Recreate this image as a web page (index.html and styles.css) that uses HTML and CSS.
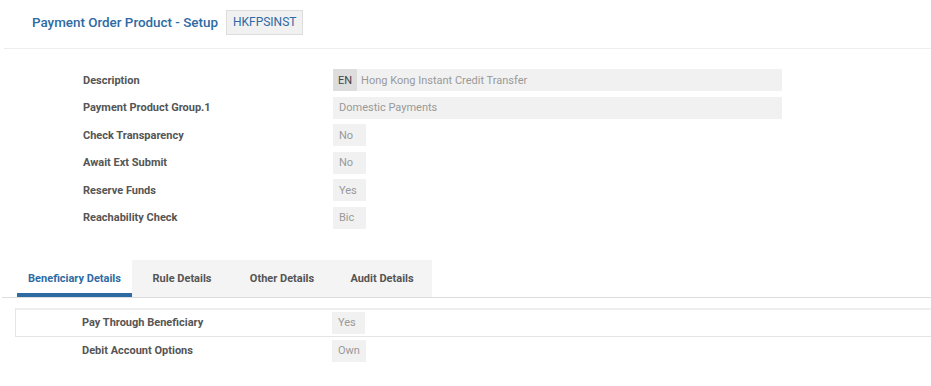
FILE: index.html
```html
<!DOCTYPE html>
<html lang="en">
<head>
  <meta charset="utf-8">
  <meta name="viewport" content="width=device-width,initial-scale=1">

  <title>Payment Order Product - Setup</title>

  <link rel="stylesheet" href="styles.css">
</head>
<body>
  <header class="page-header">
    <h1>Payment Order Product - Setup</h1>
    <span class="record-id">HKFPSINST</span>
  </header>

  <section class="fields">
    <div class="field">
      <span class="field-label">Description</span>
      <span class="field-value wide"><span class="lang">EN</span>Hong Kong Instant Credit Transfer</span>
    </div>
    <div class="field">
      <span class="field-label">Payment Product Group.1</span>
      <span class="field-value wide">Domestic Payments</span>
    </div>
    <div class="field">
      <span class="field-label">Check Transparency</span>
      <span class="field-value">No</span>
    </div>
    <div class="field">
      <span class="field-label">Await Ext Submit</span>
      <span class="field-value">No</span>
    </div>
    <div class="field">
      <span class="field-label">Reserve Funds</span>
      <span class="field-value">Yes</span>
    </div>
    <div class="field">
      <span class="field-label">Reachability Check</span>
      <span class="field-value">Bic</span>
    </div>
  </section>

  <nav class="tabs">
    <a class="tab active">Beneficiary Details</a>
    <a class="tab">Rule Details</a>
    <a class="tab">Other Details</a>
    <a class="tab">Audit Details</a>
  </nav>

  <section class="tab-panel">
    <div class="field highlighted">
      <span class="field-label">Pay Through Beneficiary</span>
      <span class="field-value">Yes</span>
    </div>
    <div class="field">
      <span class="field-label">Debit Account Options</span>
      <span class="field-value">Own</span>
    </div>
  </section>
</body>
</html>
```

FILE: styles.css
```css
*, :after, :before {
  box-sizing: border-box;
}

html, body {
  margin: 0;
  padding: 0;
}

body {
  background-color: #fff;
  color: #555;
  font-family: Roboto, "Liberation Sans", sans-serif;
  font-size: 11px;
  overflow: hidden;
}

.page-header {
  display: flex;
  align-items: center;
  gap: 8px;
  margin-left: 4px;
  padding: 10px 0 13px 28px;
  border-bottom: 1px solid #eee;
}

.page-header h1 {
  margin: 0;
  color: #2e6aa3;
  font-size: 13.4px;
  font-weight: 500;
}

.record-id {
  display: inline-block;
  height: 25px;
  padding: 0 6px;
  border: 1px solid #ddd;
  background-color: #f1f1f1;
  color: #2e6aa3;
  font-size: 12px;
  line-height: 23px;
}

.fields {
  display: flex;
  flex-direction: column;
  gap: 5.5px;
  padding: 20px 0 0 83px;
}

.field {
  display: flex;
  align-items: center;
  height: 22px;
}

.field-label {
  width: 250px;
  font-weight: 700;
  color: #555;
}

.field-value {
  display: flex;
  align-items: center;
  height: 22px;
  min-width: 33px;
  padding: 0 6px;
  background-color: #f1f1f1;
  color: #999;
}

.field-value.wide {
  width: 449px;
}

.field-value .lang {
  display: flex;
  align-items: center;
  height: 22px;
  margin: 0 4px 0 -6px;
  padding: 0 5px;
  background-color: #ddd;
  color: #444;
}

.tabs {
  display: flex;
  margin: 31px 0 0 2px;
  padding-left: 15px;
  border-bottom: 1px solid #ddd;
}

.tab {
  display: flex;
  align-items: center;
  justify-content: center;
  width: 100px;
  height: 37px;
  padding-top: 1px;
  background-color: #f4f4f4;
  color: #555;
  font-weight: 700;
}

.tab.active {
  width: 115px;
  background-color: #fff;
  border-bottom: 4px solid #2e6aa3;
  padding-top: 4px;
  color: #2e6aa3;
}

.tab-panel {
  display: flex;
  flex-direction: column;
  gap: 3px;
  margin: 10px 0 0 15px;
}

.tab-panel .field {
  padding-left: 67px;
}

.tab-panel .field.highlighted {
  height: 29px;
  padding-left: 66px;
  border-top: 2px solid #eee;
  border-left: 1px solid #e5e5e5;
  border-bottom: 1px solid #e5e5e5;
}
```
